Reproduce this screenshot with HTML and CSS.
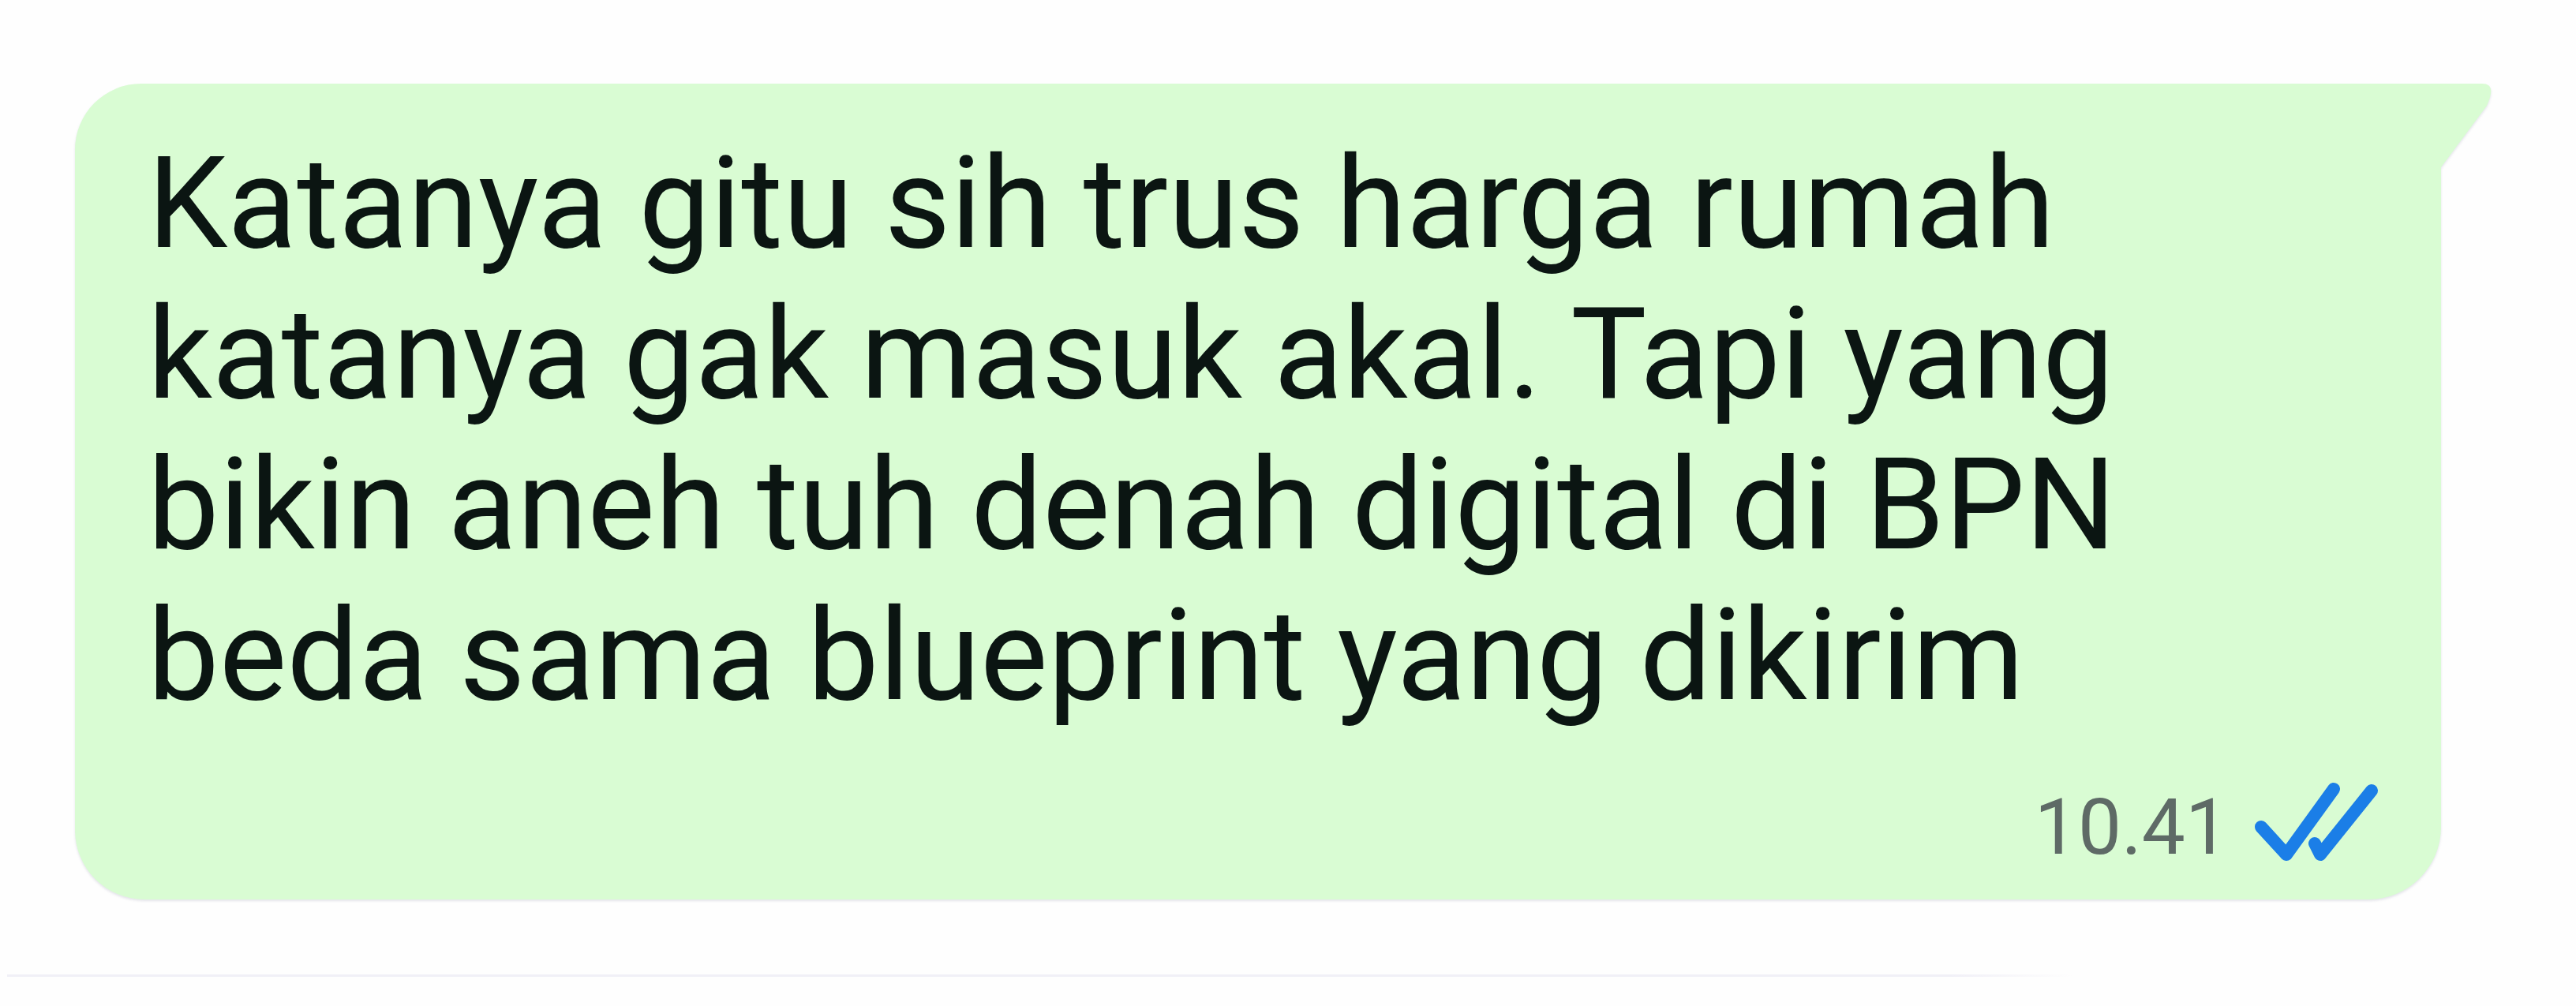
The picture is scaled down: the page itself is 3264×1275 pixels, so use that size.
FILE: index.html
```html
<!DOCTYPE html>
<html lang="id">
<head>
<meta charset="utf-8">
<title>Pesan</title>
<link rel="stylesheet" href="styles.css">
</head>
<body>
<div class="screen">
  <div class="bubble">
    <p class="text">Katanya gitu sih trus harga rumah<br>katanya gak masuk akal. Tapi yang<br>bikin aneh tuh denah digital di BPN<br>beda sama blueprint yang dikirim</p>
    <div class="meta">
      <span class="time">10.41</span>
      <svg class="ticks" viewBox="0 0 165 103" width="165" height="103" aria-hidden="true">
        <path d="M15 58 L47 93 L107 10" />
        <path d="M83 79 L90 93 L155 12" />
      </svg>
    </div>
    <svg class="tail" viewBox="0 0 66 106" width="66" height="106" aria-hidden="true">
      <path d="M0 0 H53 Q72 0 59 28 L1 106 H0 Z" />
    </svg>
  </div>
  <div class="divider"></div>
</div>
</body>
</html>
```

FILE: styles.css
```css
html, body {
  margin: 0;
  padding: 0;
  background: #fefefe;
}

.screen {
  width: 3264px;
  height: 1275px;
  display: flex;
  flex-direction: column;
  align-items: flex-start;
  overflow: hidden;
}

.bubble {
  position: relative;
  box-sizing: border-box;
  width: 2998px;
  margin: 106px 0 0 95px;
  padding: 56px 78px 42px 92px;
  background: #d9fcd3;
  border-radius: 84px 0 92px 88px;
  filter: drop-shadow(0 2px 1.5px rgba(70, 70, 110, 0.14));
}

.text {
  margin: 0;
  font-family: Roboto, "Noto Sans", sans-serif;
  font-size: 161.5px;
  line-height: 191px;
  color: #0b1512;
}

.meta {
  display: flex;
  justify-content: flex-end;
  align-items: flex-start;
  margin-top: 74px;
  height: 98px;
}

.time {
  font-family: Roboto, "Noto Sans", sans-serif;
  font-size: 98px;
  line-height: 98px;
  color: #5e6a66;
}

.ticks {
  margin: -10px 0 0 26px;
  flex: none;
}

.ticks path {
  fill: none;
  stroke: #1b7ee7;
  stroke-width: 16;
  stroke-linecap: round;
  stroke-linejoin: round;
}

.tail {
  position: absolute;
  top: 0;
  left: calc(100% - 1px);
}

.tail path {
  fill: #d9fcd3;
}

.divider {
  margin: 95px 0 0 9px;
  width: 2618px;
  height: 3px;
  background: linear-gradient(to right, #f1f0f7 0%, #f1f0f7 94%, rgba(241, 240, 247, 0) 100%);
}
```
